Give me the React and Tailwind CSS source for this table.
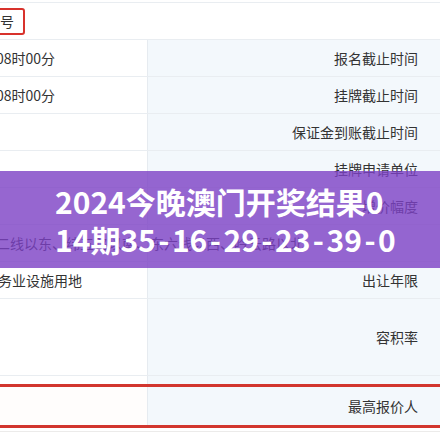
import React from "react";

const rows = [
  { left: "08时00分", right: "报名截止时间" },
  { left: "08时00分", right: "挂牌截止时间" },
  { left: "", right: "保证金到账截止时间" },
  { left: "", right: "挂牌申请单位" },
  { left: "", right: "增价幅度" },
  { left: "二线以东、纬五路以南、东六线以西、吟云路以北", right: "", wide: true },
  { left: "商业服务业设施用地", right: "出让年限", shift: true },
];

const Row = ({ left, right, wide, shift, tall }) => (
  <div className={`flex border-b border-[#e9edf1] ${tall ? "h-[77px]" : "h-[37px]"}`}>
    <div className="relative w-[148px] shrink-0 flex items-center border-r border-[#e6ebf0] bg-white">
      <span
        className={`whitespace-nowrap ${shift ? "-ml-[44px]" : "-ml-[4px]"} ${wide ? "absolute left-0 z-10" : ""}`}
      >
        {left}
      </span>
    </div>
    <div className="flex-1 flex items-center justify-end pr-[22px] bg-[#f3f8fc]">
      <span className="whitespace-nowrap">{right}</span>
    </div>
  </div>
);

const draw = "14期35-16-29-23-39-0".split(/(-)/);

export default function App() {
  return (
    <div
      className="relative w-[440px] h-[440px] overflow-hidden bg-white text-[14px] text-[#333]"
      style={{ fontFamily: '"Noto Sans CJK SC", "Noto Sans", sans-serif' }}
    >
      <div className="pt-[2px]">
        <div className="border-t border-[#e9edf1]">
          <div className="h-[37px] flex items-center border-b border-[#e9edf1] bg-white">
            <div className="-ml-[22px] h-[27px] flex items-center pl-[6px] pr-[9px] border-2 border-[#d8322c] rounded-[3px]">
              编号
            </div>
          </div>
          {rows.map((row, i) => (
            <Row key={i} {...row} />
          ))}
          <Row left="" right="容积率" tall />
          <div className="flex h-[8px]">
            <div className="w-[148px] shrink-0 border-r border-[#e6ebf0] bg-white" />
            <div className="flex-1 bg-[#f3f8fc]" />
          </div>
          <div className="flex h-[44px] border-y-[3px] border-[#d2362e]">
            <div className="w-[148px] shrink-0 border-r border-[#e6ebf0] bg-[#fffdfc]" />
            <div className="flex-1 flex items-center justify-end pr-[22px] bg-[#f3f8fc]">
              最高报价人
            </div>
          </div>
          <div className="h-[4px] bg-white border-b border-[#ecebea]" />
        </div>
      </div>

      <div className="absolute z-20 left-0 right-0 top-[171px] h-[97px] bg-[rgba(124,64,196,0.8)] pt-[11px] pl-[55px] overflow-hidden">
        <div className="text-white font-bold text-[30px] leading-[38px] whitespace-nowrap">2024今晚澳门开奖结果0</div>
        <div className="text-white font-bold text-[30px] leading-[38px] whitespace-nowrap">
          {draw.map((part, i) =>
            part === "-" ? (
              <span key={i} className="mx-[2.5px]">-</span>
            ) : (
              <span key={i}>{part}</span>
            )
          )}
        </div>
      </div>
    </div>
  );
}
